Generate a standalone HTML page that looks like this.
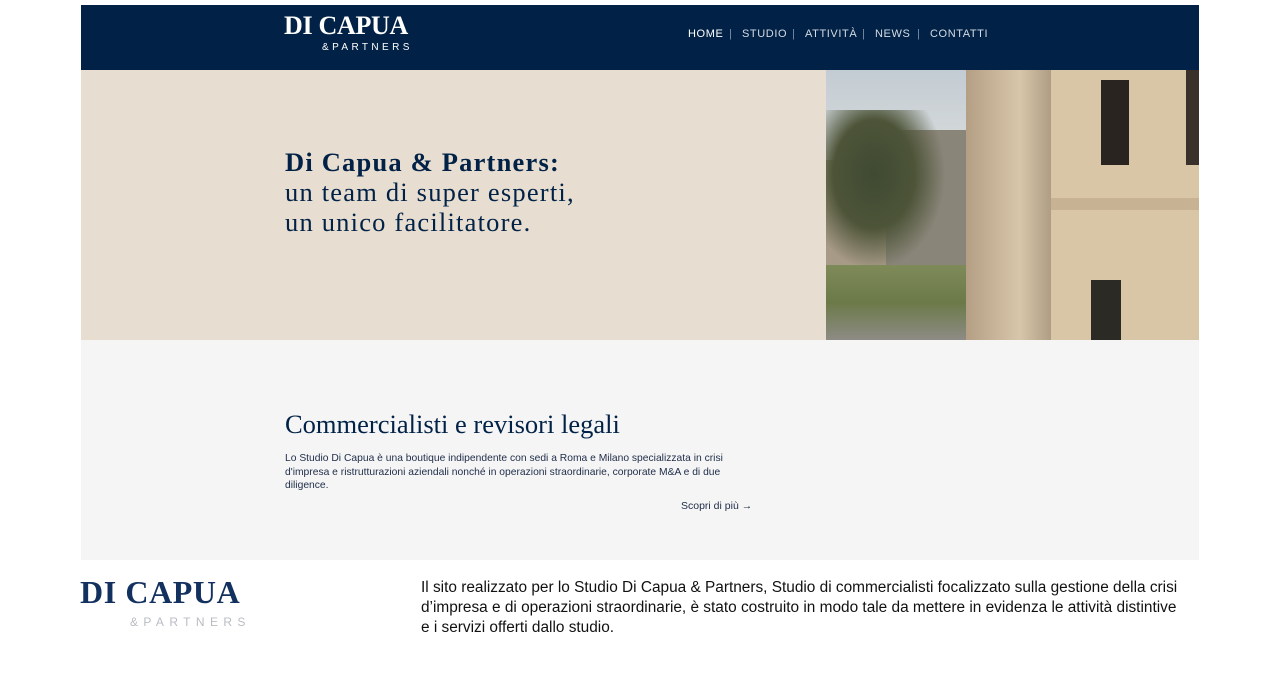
<!DOCTYPE html>
<html><head><meta charset="utf-8"><style>
*{margin:0;padding:0;box-sizing:border-box}
body{width:1280px;height:693px;background:#fff;position:relative;overflow:hidden;font-family:"Liberation Sans",sans-serif}
.abs{position:absolute}
.nav{left:81px;top:5px;width:1118px;height:65px;background:#012246}
.logo1{left:284px;top:11px;font-family:"Liberation Serif",serif;font-size:26px;font-weight:bold;color:#fff;letter-spacing:-0.3px}
.logo2{left:322px;top:42px;font-size:10px;color:#fff;letter-spacing:3.4px}
.menu{top:28px;font-size:11px;color:#d6dbe4;letter-spacing:.6px}
.sep{top:28px;font-size:11px;color:#8090a8}
.hero{left:81px;top:70px;width:745px;height:270px;background:#e8ddd1}
.h1{left:285px;top:147px;font-family:"Liberation Serif",serif;font-size:26.5px;line-height:30px;color:#012246;letter-spacing:1.2px}
.photo{left:826px;top:70px;width:373px;height:270px;overflow:hidden;background:#c9b89c}
.sec{left:81px;top:340px;width:1118px;height:220px;background:#f5f5f5}
</style></head><body>
<div class="abs nav"></div>
<div class="abs logo1">DI CAPUA</div>
<div class="abs logo2">&amp;PARTNERS</div>
<div class="abs menu" style="left:688px;color:#fff">HOME</div>
<div class="abs sep" style="left:729px">|</div>
<div class="abs menu" style="left:742px">STUDIO</div>
<div class="abs sep" style="left:792px">|</div>
<div class="abs menu" style="left:805px">ATTIVITÀ</div>
<div class="abs sep" style="left:862px">|</div>
<div class="abs menu" style="left:875px">NEWS</div>
<div class="abs sep" style="left:917px">|</div>
<div class="abs menu" style="left:930px">CONTATTI</div>

<div class="abs hero"></div>
<div class="abs h1"><b>Di Capua &amp; Partners:</b><br>un team di super esperti,<br>un unico facilitatore.</div>

<div class="abs photo">
 <div class="abs" style="left:0;top:0;width:160px;height:120px;background:linear-gradient(#c3ccd3,#dfe1df)"></div>
 <div class="abs" style="left:0;top:90px;width:60px;height:110px;background:#a79a86"></div>
 <div class="abs" style="left:60px;top:60px;width:105px;height:140px;background:#8a8579"></div>
 <div class="abs" style="left:0;top:40px;width:120px;height:160px;background:radial-gradient(ellipse at 40% 40%,#3f4a32 0,#4d5438 40%,transparent 70%)"></div>
 <div class="abs" style="left:0;top:195px;width:150px;height:75px;background:linear-gradient(#7f8a59,#6b7a48 50%,#8d8b85)"></div>
 <div class="abs" style="left:140px;top:0;width:90px;height:270px;background:linear-gradient(90deg,#b49f85,#d8c6aa 60%,#a8967e)"></div>
 <div class="abs" style="left:225px;top:0;width:148px;height:270px;background:#d9c6a6"></div>
 <div class="abs" style="left:275px;top:10px;width:28px;height:85px;background:#2a2420"></div>
 <div class="abs" style="left:265px;top:210px;width:30px;height:60px;background:#2c2a24"></div>
 <div class="abs" style="left:360px;top:0;width:13px;height:95px;background:#3a322a"></div>
 <div class="abs" style="left:225px;top:128px;width:148px;height:12px;background:#c7b393"></div>
</div>

<div class="abs sec"></div>
<div class="abs" style="left:285px;top:409px;font-family:'Liberation Serif',serif;font-size:26.5px;color:#012246">Commercialisti e revisori legali</div>
<div class="abs" style="left:285px;top:452px;width:460px;font-size:10.3px;line-height:13.5px;color:#1e2c48">Lo Studio Di Capua è una boutique indipendente con sedi a Roma e Milano specializzata in crisi d'impresa e ristrutturazioni aziendali nonché in operazioni straordinarie, corporate M&amp;A e di due diligence.</div>
<div class="abs" style="left:681px;top:500px;font-size:10.5px;color:#1e2c48">Scopri di più →</div>

<div class="abs" style="left:80px;top:574px;font-family:'Liberation Serif',serif;font-size:32px;font-weight:bold;color:#13315f;letter-spacing:0.6px">DI CAPUA</div>
<div class="abs" style="left:130px;top:615px;font-size:12px;color:#b8bcc2;letter-spacing:5.4px">&amp;PARTNERS</div>
<div class="abs" style="left:421px;top:578px;width:765px;font-size:15.4px;line-height:20px;color:#111">Il sito realizzato per lo Studio Di Capua &amp; Partners, Studio di commercialisti focalizzato sulla gestione della crisi d’impresa e di operazioni straordinarie, è stato costruito in modo tale da mettere in evidenza le attività distintive e i servizi offerti dallo studio.</div>
</body></html>
